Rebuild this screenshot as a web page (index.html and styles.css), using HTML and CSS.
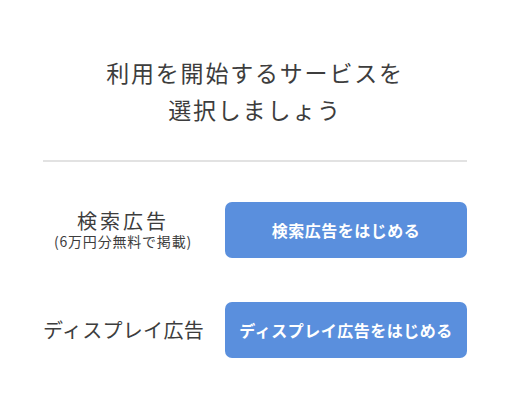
FILE: index.html
```html
<!DOCTYPE html>
<html lang="ja">
<head>
<meta charset="utf-8">
<link rel="stylesheet" href="styles.css">
</head>
<body>
<div class="modal">
  <h1 class="title">利用を開始するサービスを<br>選択しましょう</h1>
  <hr class="divider">
  <div class="rows">
    <div class="row">
      <div class="label">
        <div class="label-main wide">検索広告</div>
        <div class="label-sub">(6万円分無料で掲載)</div>
      </div>
      <a class="btn" href="#">検索広告をはじめる</a>
    </div>
    <div class="row">
      <div class="label">
        <div class="label-main">ディスプレイ広告</div>
      </div>
      <a class="btn" href="#">ディスプレイ広告をはじめる</a>
    </div>
  </div>
</div>
</body>
</html>
```

FILE: styles.css
```css
html, body {
  margin: 0;
  padding: 0;
  background: #ffffff;
}
body {
  font-family: "Noto Sans CJK JP", "Noto Sans", sans-serif;
  color: #3d3d3d;
}
.modal {
  width: 508px;
  height: 418px;
  box-sizing: border-box;
  padding: 54px 41px 0 43px;
}
.title {
  margin: 0;
  font-size: 23px;
  font-weight: 400;
  line-height: 37px;
  letter-spacing: 1.8px;
  text-align: center;
}
.divider {
  margin: 32px 0 0 0;
  border: 0;
  height: 2px;
  background: #e2e2e2;
}
.rows {
  margin-top: 40px;
  display: flex;
  flex-direction: column;
  gap: 44px;
}
.row {
  display: flex;
  align-items: center;
  gap: 22px;
  height: 56px;
}
.label {
  width: 160px;
  flex: none;
  text-align: center;
  white-space: nowrap;
}
.label-main {
  font-size: 20px;
  line-height: 22px;
  letter-spacing: 0.3px;
}
.label-main.wide {
  letter-spacing: 3px;
}
.label-sub {
  font-size: 14px;
  line-height: 18px;
  letter-spacing: 0.8px;
}
.btn {
  flex: 1;
  height: 56px;
  display: flex;
  align-items: center;
  justify-content: center;
  background: #5a8fdd;
  border-radius: 7px;
  color: #ffffff;
  font-size: 16px;
  font-weight: 700;
  letter-spacing: 0.5px;
  text-decoration: none;
  white-space: nowrap;
}
```
